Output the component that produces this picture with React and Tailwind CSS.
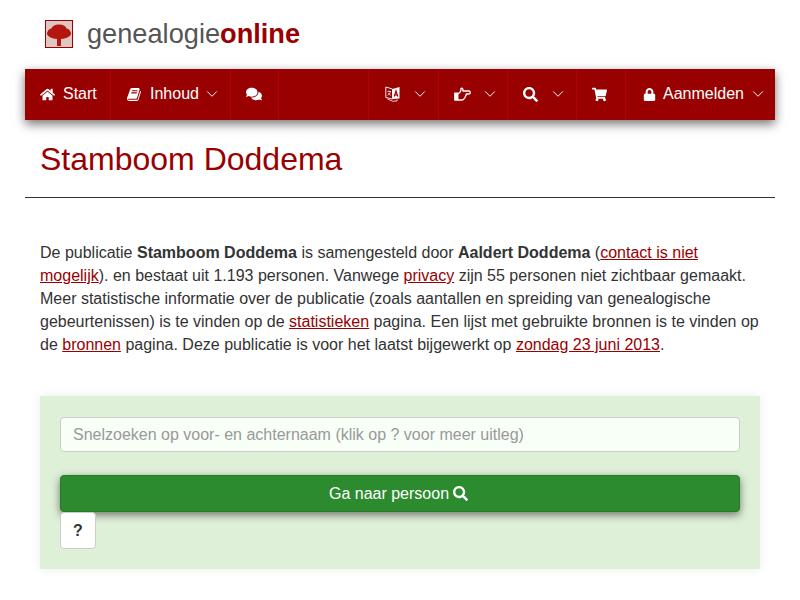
import { ChevronDown } from "lucide-react";
import { FaHome, FaComments, FaSearch, FaShoppingCart, FaLock } from "react-icons/fa";

function BookIcon() {
  return (
    <svg width="15" height="15" viewBox="0 0 1792 1792" fill="white">
      <path d="M1639 478q40 57 18 129l-275 906q-19 64-76.500 107.500t-122.500 43.500h-923q-77 0-148.500-53.500t-99.500-131.500q-24-67-2-127 0-4 3-27t4-37q1-8-3-21.500t-3-19.500q2-11 8-21t16.500-23.500 16.500-23.500q23-38 45-91.500t30-91.500q3-10 .5-30t-.5-28q3-11 17-28t17-23q21-36 42-92t25-90q1-9-2.500-32t.5-28q4-13 22-30.500t22-22.500q19-26 42.500-84.500t27.500-96.500q1-8-3-25.500t-2-26.500q2-8 9-18t18-23 17-21q8-12 16.500-30.500t15-35 16-36 19.500-32 26.500-23.500 36-11.500 47.500 5.500l-1 3q38-9 51-9h761q74 0 114 56t18 130l-274 906q-36 119-71.500 153.500t-128.500 34.500h-869q-27 0-38 15-11 16-1 43 24 70 144 70h923q29 0 56-15.500t35-41.500l300-987q7-22 5-57 38 15 59 43zm-1064 2q-4 13 2 22.500t20 9.500h608q13 0 25.500-9.500t16.500-22.500l21-64q4-13-2-22.500t-20-9.500h-608q-13 0-25.500 9.500t-16.500 22.500zm-83 256q-4 13 2 22.500t20 9.500h608q13 0 25.500-9.500t16.500-22.500l21-64q4-13-2-22.500t-20-9.500h-608q-13 0-25.500 9.500t-16.500 22.500z" />
    </svg>
  );
}

function LanguageIcon() {
  return (
    <svg width="15" height="16" viewBox="0 0 15 16" fill="none">
      <path d="M0.800 1 L7.500 3 V13 L0.800 11.500 Z" stroke="white" strokeWidth="0.900" />
      <path d="M7.500 3 L14.500 1 V12.500 L7.500 13 Z" fill="white" />
      <path d="M9.200 10.500 L11 5 L12.800 10.500 M9.800 9 H12.200" stroke="#990000" strokeWidth="1.200" />
      <path d="M2.500 5.500 H6 M4.200 4.600 V5.500 M5.400 5.500 C5 7.500 3.800 8.800 2.500 9.400 M3.200 7 C3.800 8.200 4.600 8.800 6 9.400" stroke="white" strokeWidth="0.700" />
      <path d="M2.500 13 L7.500 15.200 L12 15 V13.500" stroke="white" strokeWidth="0.800" />
    </svg>
  );
}

function HandIcon() {
  return (
    <svg width="17" height="14" viewBox="0 0 17 14" fill="none" stroke="white" strokeWidth="1.300" strokeLinejoin="round">
      <rect x="0.800" y="6.200" width="3" height="6.800" fill="white" />
      <path d="M3.800 6.800 C5.500 6.300 7 4.500 7 1.300 C8.800 1 9.400 2.600 8.800 4 H15 C16.600 4 16.600 7 15 7 H12.200 C12.400 8.200 12 9 11.300 9.400 C11.400 10.400 11 11.200 10.200 11.400 C10 12.600 9.200 13 8 13 H3.800" />
    </svg>
  );
}

function Caret({ className }) {
  return <ChevronDown size={18} strokeWidth={1.300} className={className} />;
}

function Tree() {
  return (
    <svg width="28" height="28" viewBox="0 0 26 26" className="shrink-0 border border-[#990000] bg-[#dfc6c1]">
      <ellipse cx="13" cy="12.500" rx="12" ry="5.500" fill="#b5160f" />
      <ellipse cx="13" cy="8" rx="7.500" ry="4.500" fill="#b5160f" />
      <ellipse cx="6" cy="11" rx="4" ry="3.500" fill="#b5160f" />
      <ellipse cx="20" cy="11" rx="4" ry="3.500" fill="#b5160f" />
      <path d="M11 16 H15 V25 H11 Z" fill="#b5160f" />
    </svg>
  );
}

function NavItem({ width, children, border = true }) {
  return (
    <div className={`flex h-full items-center pb-[1px] text-white ${width} ${border ? "border-r border-[#b30000]" : ""}`}>
      {children}
    </div>
  );
}

const linkClass = "text-[#990000] underline";

export default function App() {
  return (
    <div className="min-h-[600px] overflow-hidden bg-white font-['Liberation_Sans',Arial,sans-serif] text-base text-[#333]">
      <div className="flex h-[69px] items-center pl-[45px] pb-[1px]">
        <Tree />
        <div className="ml-[14px] text-[27.2px] leading-none text-[#555]">
          genealogie<span className="font-bold text-[#990000]">online</span>
        </div>
      </div>

      <nav className="mx-[25px] flex h-[51px] items-center justify-between bg-[#990000] shadow-[0_4px_10px_rgba(0,0,0,0.55)]">
        <div className="flex h-full">
          <NavItem width="w-[86px] pl-[15px] gap-[8px]">
            <FaHome size={15} />
            <span>Start</span>
          </NavItem>
          <NavItem width="w-[120px] pl-[16px]">
            <BookIcon />
            <span className="ml-[8px]">Inhoud</span>
            <Caret className="ml-[4px]" />
          </NavItem>
          <NavItem width="w-[48px] pl-[15px]">
            <FaComments size={16} />
          </NavItem>
        </div>
        <div className="flex h-full border-l border-[#b30000]">
          <NavItem width="w-[70px] pl-[16px] gap-[11px]">
            <LanguageIcon />
            <Caret />
          </NavItem>
          <NavItem width="w-[69px] pl-[15px] gap-[10px]">
            <HandIcon />
            <Caret />
          </NavItem>
          <NavItem width="w-[69px] pl-[15px] gap-[11px]">
            <FaSearch size={15} />
            <Caret />
          </NavItem>
          <NavItem width="w-[49px] pl-[15px]">
            <FaShoppingCart size={15} />
          </NavItem>
          <NavItem width="w-[149px] pl-[17px]" border={false}>
            <FaLock size={13} />
            <span className="ml-[7px]">Aanmelden</span>
            <Caret className="ml-[5px]" />
          </NavItem>
        </div>
      </nav>

      <main className="mx-[25px]">
        <h1 className="border-b border-[#333] px-[15px] pt-[21px] pb-[19px] text-[32px] leading-[37px] font-normal text-[#990000]">
          Stamboom Doddema
        </h1>

        <p className="px-[15px] pt-[43px] leading-[23px] text-[#333]">
          De publicatie <b>Stamboom Doddema</b> is samengesteld door <b>Aaldert Doddema</b> (
          <a className={linkClass}>contact is niet mogelijk</a>). en bestaat uit 1.193 personen. Vanwege{" "}
          <a className={linkClass}>privacy</a> zijn 55 personen niet zichtbaar gemaakt. Meer statistische informatie over
          de publicatie (zoals aantallen en spreiding van genealogische gebeurtenissen) is te vinden op de{" "}
          <a className={linkClass}>statistieken</a> pagina. Een lijst met gebruikte bronnen is te vinden op de{" "}
          <a className={linkClass}>bronnen</a> pagina. Deze publicatie is voor het laatst bijgewerkt op{" "}
          <a className={linkClass}>zondag 23 juni 2013</a>.
        </p>

        <section className="mx-[15px] mt-[40px] flex h-[173px] flex-col bg-[#dff0d8] px-[20px] pt-[21px] shadow-[0_0_10px_rgba(0,0,0,0.08)]">
          <input
            placeholder="Snelzoeken op voor- en achternaam (klik op ? voor meer uitleg)"
            className="h-[35px] w-full rounded-[4px] border border-[#ccc] bg-[#f7fff7] px-[12px] text-base text-[#555] outline-none placeholder:text-[#999]"
          />
          <button className="mt-[23px] flex h-[37px] w-full items-center justify-center gap-[4px] rounded-[4px] border border-[#267a26] bg-[#2c8a2f] pr-[3px] text-white shadow-[0_3px_8px_rgba(0,0,0,0.5)]">
            Ga naar persoon <FaSearch size={15} />
          </button>
          <button className="relative h-[37px] w-[36px] rounded-[4px] border border-[#ccc] bg-white font-bold text-[#333]">
            ?
          </button>
        </section>
      </main>
    </div>
  );
}
